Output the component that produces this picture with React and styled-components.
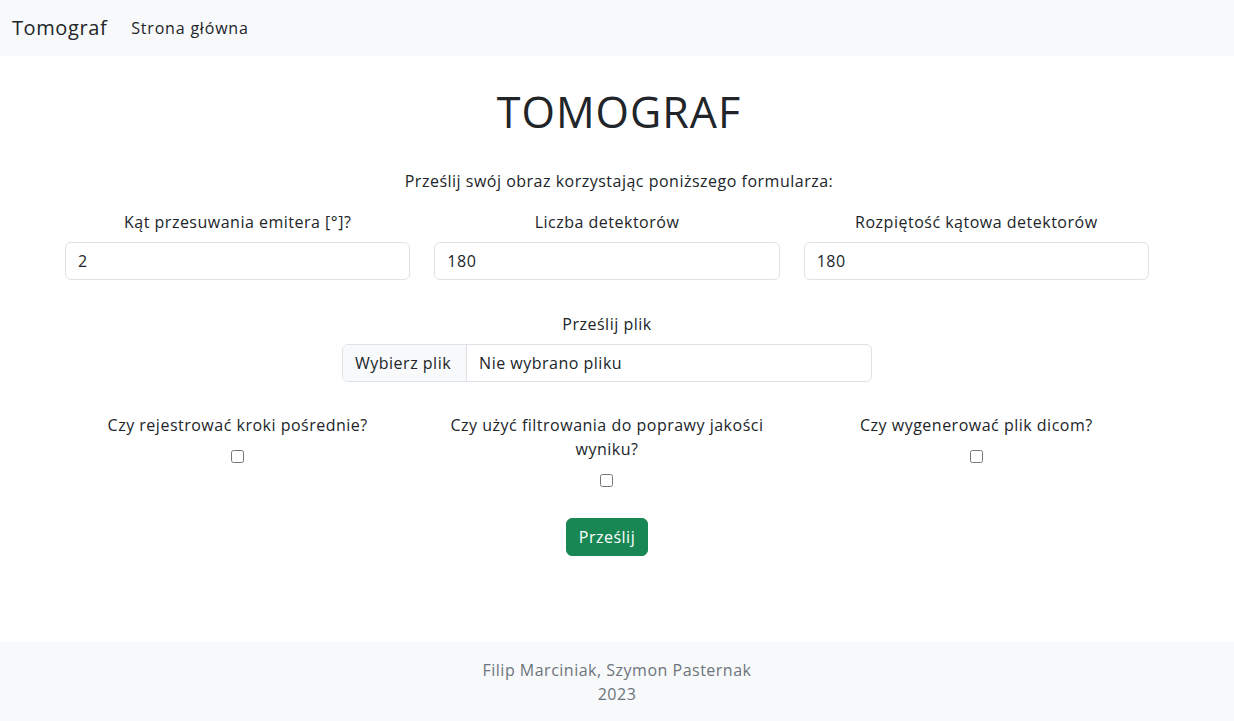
import React from "react";
import styled, { createGlobalStyle } from "styled-components";

const GlobalStyle = createGlobalStyle`
  * { box-sizing: border-box; }
  body {
    margin: 0;
    font-family: "Open Sans", "Noto Sans", sans-serif;
    font-size: 16px;
    line-height: 24px;
    letter-spacing: 0.5px;
    color: #212529;
    background: #fff;
  }
`;

const Page = styled.div`
  min-height: 100vh;
  display: flex;
  flex-direction: column;
`;

const Navbar = styled.nav`
  height: 56px;
  background: #f8f9fa;
  display: flex;
  align-items: center;
  padding: 0 12px;
`;

const Brand = styled.a`
  font-size: 20px;
  line-height: 30px;
  letter-spacing: 0.6px;
  color: #212529;
  text-decoration: none;
  margin-right: 24px;
`;

const NavLink = styled.a`
  font-size: 16px;
  letter-spacing: 0.8px;
  color: #212529;
  text-decoration: none;
`;

const Main = styled.main`
  flex: 1;
  display: flex;
  flex-direction: column;
  align-items: center;
  padding-top: 31px;
`;

const Title = styled.h1`
  margin: 0;
  font-size: 43px;
  line-height: 50px;
  font-weight: 400;
  letter-spacing: 1px;
  text-align: center;
  transform: translateX(2px);
`;

const Intro = styled.p`
  margin: 32px 0 17px;
  text-align: center;
  transform: translateX(2px);
`;

const Form = styled.form`
  width: 1108px;
  display: flex;
  flex-direction: column;
  align-items: center;
  transform: translateX(-10px);
`;

const Row = styled.div`
  width: 100%;
  display: grid;
  grid-template-columns: repeat(3, 1fr);
`;

const Col = styled.div`
  padding: 0 12px;
  display: flex;
  flex-direction: column;
  align-items: center;
  text-align: center;
`;

const Label = styled.label`
  display: block;
  margin-bottom: 8px;
`;

const Input = styled.input`
  width: 100%;
  height: 38px;
  padding: 6px 12px;
  font: inherit;
  letter-spacing: inherit;
  color: #212529;
  border: 1px solid #dee2e6;
  border-radius: 6px;
  background: #fff;
  outline: none;
`;

const FileGroup = styled.div`
  margin-top: 32px;
  display: flex;
  flex-direction: column;
  align-items: center;
`;

const FileBox = styled.div`
  width: 530px;
  height: 38px;
  display: flex;
  border: 1px solid #dee2e6;
  border-radius: 6px;
  overflow: hidden;
`;

const FileButton = styled.span`
  padding: 6px 15px 6px 12px;
  background: #f8f9fa;
  border-right: 1px solid #dee2e6;
  white-space: nowrap;
`;

const FileName = styled.span`
  padding: 6px 12px;
`;

const CheckRow = styled(Row)`
  margin-top: 31px;
`;

const CheckLabel = styled.label`
  display: block;
  padding: 0 4px;
`;

const Check = styled.input`
  width: 13px;
  height: 13px;
  margin: 13px 0 0;
`;

const Submit = styled.button`
  margin-top: 31px;
  height: 38px;
  padding: 6px 12px;
  font: inherit;
  letter-spacing: inherit;
  color: #fff;
  background: #198754;
  border: 1px solid #198754;
  border-radius: 6px;
`;

const Footer = styled.footer`
  height: 79px;
  background: #f8f9fa;
  padding-top: 16px;
  text-align: center;
  color: #6c757d;
`;

const numberFields = [
  { label: "Kąt przesuwania emitera [°]?", value: "2" },
  { label: "Liczba detektorów", value: "180" },
  { label: "Rozpiętość kątowa detektorów", value: "180" },
];

const checks = [
  "Czy rejestrować kroki pośrednie?",
  "Czy użyć filtrowania do poprawy jakości wyniku?",
  "Czy wygenerować plik dicom?",
];

export default function App() {
  return (
    <>
      <GlobalStyle />
      <Page>
        <Navbar>
          <Brand href="#">Tomograf</Brand>
          <NavLink href="#">Strona główna</NavLink>
        </Navbar>
        <Main>
          <Title>TOMOGRAF</Title>
          <Intro>Prześlij swój obraz korzystając poniższego formularza:</Intro>
          <Form onSubmit={(e) => e.preventDefault()}>
            <Row>
              {numberFields.map((f) => (
                <Col key={f.label}>
                  <Label>{f.label}</Label>
                  <Input type="text" defaultValue={f.value} />
                </Col>
              ))}
            </Row>
            <FileGroup>
              <Label>Prześlij plik</Label>
              <FileBox>
                <FileButton>Wybierz plik</FileButton>
                <FileName>Nie wybrano pliku</FileName>
              </FileBox>
            </FileGroup>
            <CheckRow>
              {checks.map((c) => (
                <Col key={c}>
                  <CheckLabel>{c}</CheckLabel>
                  <Check type="checkbox" />
                </Col>
              ))}
            </CheckRow>
            <Submit type="submit">Prześlij</Submit>
          </Form>
        </Main>
        <Footer>
          <div>Filip Marciniak, Szymon Pasternak</div>
          <div>2023</div>
        </Footer>
      </Page>
    </>
  );
}
